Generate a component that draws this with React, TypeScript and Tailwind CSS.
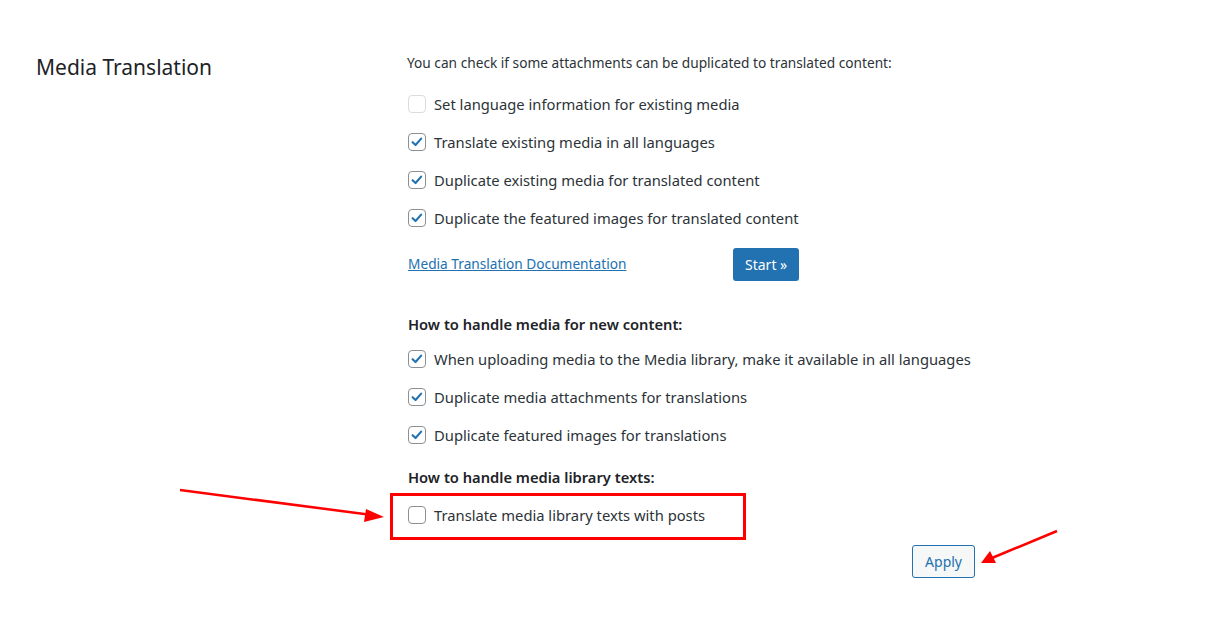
const FONT = { fontFamily: '"Noto Sans", "Open Sans", sans-serif' };

function Checkbox({ checked, disabled }: { checked: boolean; disabled?: boolean }) {
  return (
    <span
      className={
        disabled
          ? "flex h-[18px] w-[18px] shrink-0 items-center justify-center rounded-[4px] border border-[#dcdcde] bg-white"
          : "flex h-[18px] w-[18px] shrink-0 items-center justify-center rounded-[4px] border border-[#8c8f94] bg-white"
      }
    >
      {checked && (
        <svg viewBox="0 0 20 20" className="h-[16px] w-[16px]">
          <path
            d="M4.5 10.2 L8.2 13.8 L15.2 5.8"
            fill="none"
            stroke="#2271b1"
            strokeWidth="2.6"
            strokeLinecap="round"
            strokeLinejoin="round"
          />
        </svg>
      )}
    </span>
  );
}

function Row({ label, checked, disabled }: { label: string; checked: boolean; disabled?: boolean }) {
  return (
    <label className="flex h-[38px] items-center gap-2 whitespace-nowrap pl-px">
      <Checkbox checked={checked} disabled={disabled} />
      <span className="text-[14.75px] text-[#2c3338]">{label}</span>
    </label>
  );
}

function Arrows() {
  return (
    <svg
      className="pointer-events-none absolute left-0 top-0"
      width="1206"
      height="632"
      viewBox="0 0 1206 632"
    >
      <line x1="180" y1="490" x2="372" y2="515" stroke="#f00" strokeWidth="2.5" />
      <polygon points="384,517 366,509 364,522" fill="#f00" />
      <line x1="1057" y1="531" x2="992" y2="558" stroke="#f00" strokeWidth="2.5" />
      <polygon points="981,563 990,551 996,563" fill="#f00" />
    </svg>
  );
}

export default function App() {
  return (
    <div className="relative h-[632px] w-full bg-white text-[#2c3338]" style={FONT}>
      <div className="flex">
        <div className="w-[407px] shrink-0 pl-[36px] pt-[52px]">
          <h2 className="text-[21px] font-normal leading-[30px] text-[#1d2327]">
            Media Translation
          </h2>
        </div>
        <div className="w-[568px] pt-[53px]">
          <p className="whitespace-nowrap text-[13.7px] leading-[20px]">
            You can check if some attachments can be duplicated to translated content:
          </p>
          <div className="mt-[12px]">
            <Row checked={false} disabled label="Set language information for existing media" />
            <Row checked label="Translate existing media in all languages" />
            <Row checked label="Duplicate existing media for translated content" />
            <Row checked label="Duplicate the featured images for translated content" />
          </div>
          <div className="mt-[11px] flex items-center pl-px">
            <a href="#" className="w-[325px] text-[13.7px] text-[#2271b1] underline">
              Media Translation Documentation
            </a>
            <button className="h-[33px] rounded-[3px] bg-[#2271b1] px-[12px] text-[14px] text-white">
              Start »
            </button>
          </div>
          <h3 className="mt-[33px] pl-px text-[14.7px] font-semibold leading-[20px] text-[#1d2327]">
            How to handle media for new content:
          </h3>
          <div className="mt-[6px]">
            <Row checked label="When uploading media to the Media library, make it available in all languages" />
            <Row checked label="Duplicate media attachments for translations" />
            <Row checked label="Duplicate featured images for translations" />
          </div>
          <h3 className="mt-[13px] pl-px text-[14.7px] font-semibold leading-[20px] text-[#1d2327]">
            How to handle media library texts:
          </h3>
          <div className="-ml-[17px] mt-[6px] h-[47px] w-[356px] border-[3px] border-[#f00] pl-[14px]">
            <Row checked={false} label="Translate media library texts with posts" />
          </div>
          <div className="mt-[5px] flex justify-end">
            <button className="h-[33px] rounded-[3px] border border-[#2271b1] bg-[#f6f7f7] px-[12px] text-[14px] text-[#2271b1]">
              Apply
            </button>
          </div>
        </div>
      </div>
      <Arrows />
    </div>
  );
}
